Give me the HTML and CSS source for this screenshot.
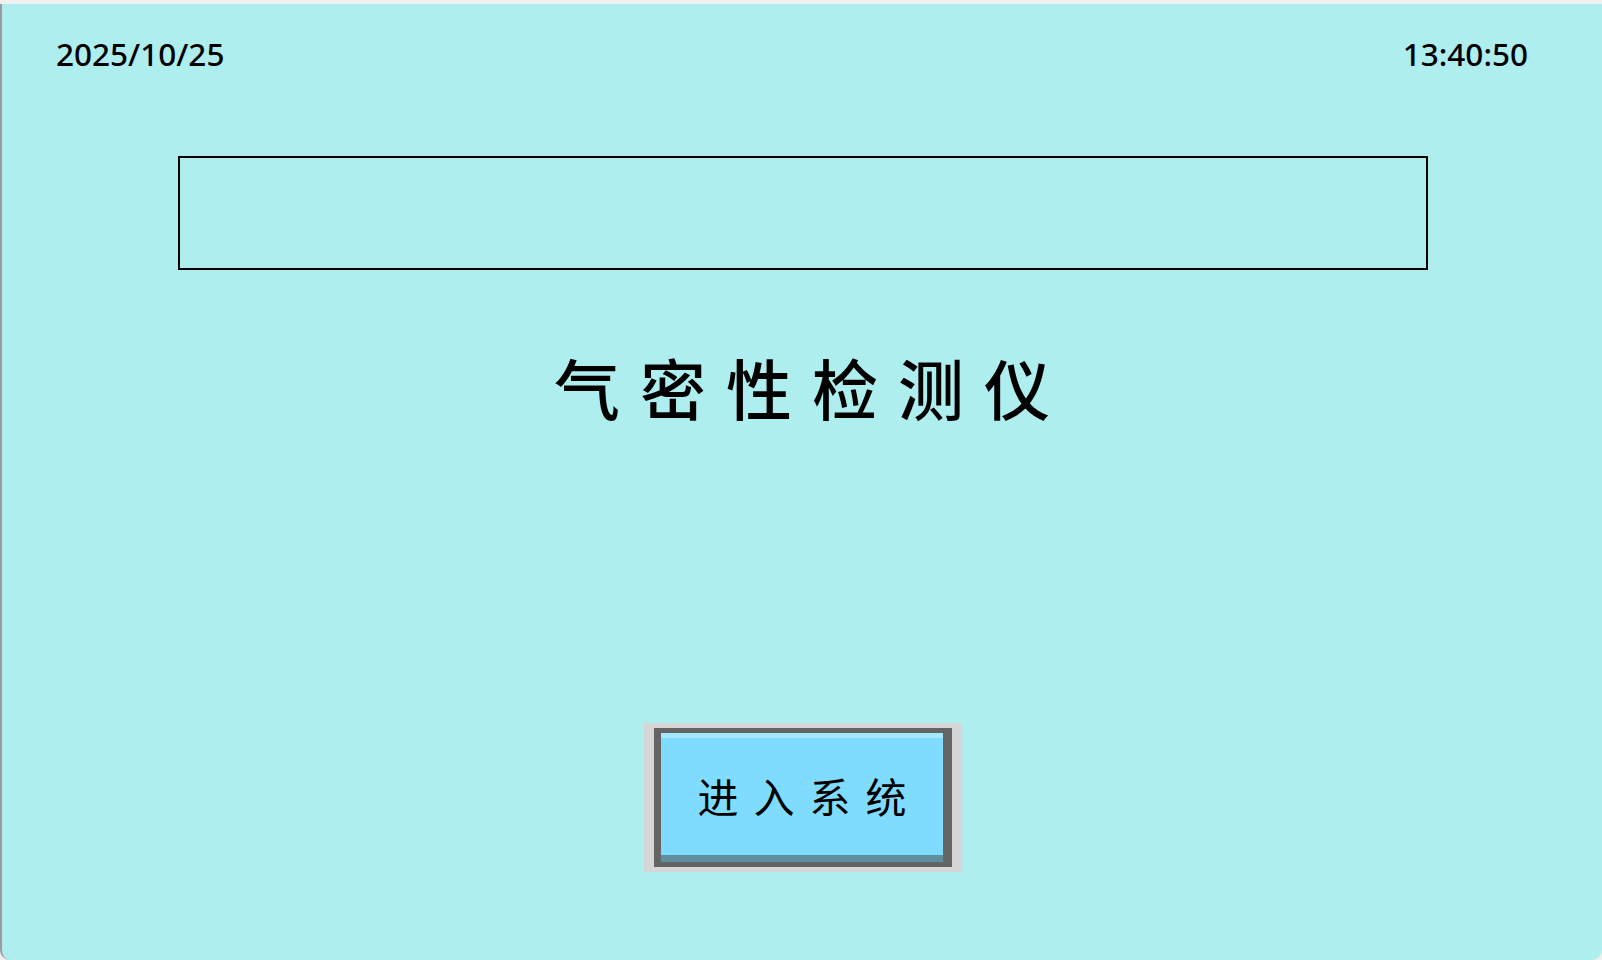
FILE: index.html
```html
<!DOCTYPE html>
<html lang="zh-CN">
<head>
    <meta charset="UTF-8">
    <meta name="viewport" content="width=device-width, initial-scale=1.0">
    <title>气密性检测仪</title>
    <link rel="stylesheet" href="styles.css">
</head>
<body>
    <div class="screen">
        <div class="topbar">
            <span class="date" id="date">2025/10/25</span>
            <span class="time" id="time">13:40:50</span>
        </div>

        <div class="banner"></div>

        <h1 class="title">气密性检测仪</h1>

        <div class="enter-wrap">
            <div class="enter-frame">
                <button type="button" class="enter">进入系统</button>
            </div>
        </div>
    </div>
</body>
</html>
```

FILE: styles.css
```css
html, body {
    margin: 0;
    padding: 0;
}
body {
    background-color: #f0f0f0;
    padding-top: 4px;
    font-family: "Noto Sans CJK SC", "Noto Sans", sans-serif;
    color: #000;
}
.screen {
    height: 956px;
    box-sizing: border-box;
    background-color: #afeeee;
    border-left: 2px solid #9c9c9c;
    border-bottom-left-radius: 10px;
    border-bottom-right-radius: 10px;
    overflow: hidden;
}
.topbar {
    display: flex;
    justify-content: space-between;
    margin-top: 30px;
    padding: 0 74px 0 54px;
    font-family: "Noto Sans", sans-serif;
    font-size: 31.5px;
    font-weight: 500;
    line-height: 40px;
}
.banner {
    width: 1250px;
    height: 114px;
    box-sizing: border-box;
    margin: 82px 0 0 176px;
    border: 2px solid #000;
}
.title {
    margin: 76px 0 0 0;
    text-align: center;
    font-size: 66px;
    font-weight: 500;
    line-height: 80px;
    letter-spacing: 20px;
    padding-left: 20px;
}
.enter-wrap {
    display: flex;
    justify-content: center;
    margin-top: 297px;
    padding-left: 2px;
}
.enter-frame {
    background-color: #d6d6d6;
    padding: 5px 10px;
}
.enter {
    display: block;
    width: 298px;
    height: 139px;
    margin: 0;
    background-color: #80dcff;
    border-style: solid;
    border-color: #646464;
    border-width: 5px 9px 5px 7px;
    box-shadow: inset 0 5px 0 #a6e8ff, inset 0 -7px 0 #5f8e9e;
    font-family: "Noto Sans CJK SC", sans-serif;
    font-size: 41px;
    letter-spacing: 15px;
    padding: 0 0 6px 15px;
    color: #000;
    cursor: pointer;
}
```
